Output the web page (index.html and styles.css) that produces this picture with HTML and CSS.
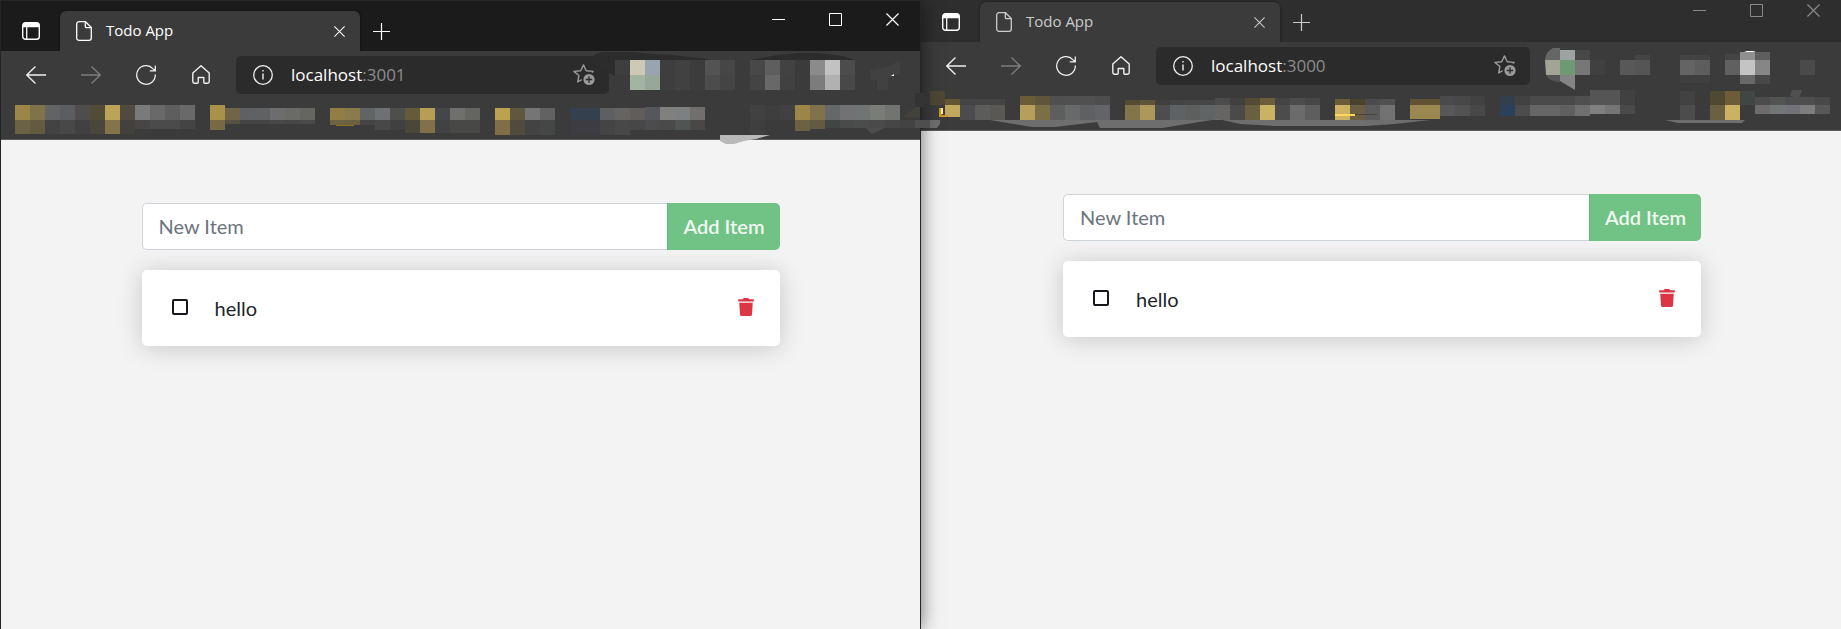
FILE: index.html
```html
<!DOCTYPE html>
<html lang="en">
<head>
<meta charset="utf-8">
<title>Todo App</title>
<link rel="stylesheet" href="styles.css">
</head>
<body>
<svg class="sprite" aria-hidden="true">
  <symbol id="i-tabs" viewBox="0 0 18 18"><rect x=".7" y=".7" width="16.6" height="16.6" rx="2.8" fill="none" stroke="currentColor" stroke-width="1.4"/><path d="M1 5.2V3a2 2 0 0 1 2-2h12a2 2 0 0 1 2 2v2.200z" fill="currentColor"/><path d="M4.700 5v12.500" stroke="currentColor" stroke-width="1.300"/></symbol>
  <symbol id="i-file" viewBox="0 0 16 20"><path d="M3 .7h6.500l5.800 5.800V17a2.300 2.300 0 0 1-2.300 2.300H3A2.300 2.300 0 0 1 .7 17V3A2.300 2.300 0 0 1 3 .7zM9.300 1v4.200c0 1 .6 1.500 1.500 1.500h4.200" fill="none" stroke="currentColor" stroke-width="1.300"/></symbol>
  <symbol id="i-x" viewBox="0 0 14 14"><path d="M.5.5l13 13M13.500.5l-13 13" stroke="currentColor" stroke-width="1.300"/></symbol>
  <symbol id="i-plus" viewBox="0 0 17 17"><path d="M8.500 0v17M0 8.500h17" stroke="currentColor" stroke-width="1.200"/></symbol>
  <symbol id="i-min" viewBox="0 0 13 13"><path d="M0 6.500h13" stroke="currentColor"/></symbol>
  <symbol id="i-max" viewBox="0 0 13 13"><path d="M.5.5h12v12H.5z" fill="none" stroke="currentColor"/></symbol>
  <symbol id="i-arrow" viewBox="0 0 20 18"><path d="M20 9H.8M9.500.5L.8 9l8.700 8.500" fill="none" stroke="currentColor" stroke-width="1.300"/></symbol>
  <symbol id="i-reload" viewBox="0 0 20 20"><path d="M19.300 9.500A9.300 9.300 0 1 1 16.800 3.600L18.800 5.500M19.300.4v5.400h-5.500" fill="none" stroke="currentColor" stroke-width="1.300"/></symbol>
  <symbol id="i-home" viewBox="0 0 18 19"><path d="M9 .8L.8 8v8.500c0 1 .6 1.700 1.700 1.700h2.700c.6 0 1-.4 1-1v-4.700h5.600v4.700c0 .6.4 1 1 1h2.700c1.100 0 1.700-.7 1.700-1.700V8z" fill="none" stroke="currentColor" stroke-width="1.400" stroke-linejoin="round"/></symbol>
  <symbol id="i-info" viewBox="0 0 20 20"><circle cx="10" cy="10" r="9.300" fill="none" stroke="currentColor" stroke-width="1.300"/><path d="M10 8.500v6M10 5v1.500" stroke="currentColor" stroke-width="1.400"/></symbol>
  <symbol id="i-star" viewBox="0 0 22 22"><path d="M8.600 15.700L4.700 18l1.200-6.500L.9 7.400 7.700 6.800 10.500.9l2.700 5.900 6.900.6-1.300 1.200" fill="none" stroke="currentColor" stroke-width="1.400" stroke-linejoin="round"/><circle cx="16" cy="15.500" r="5.600" fill="currentColor"/><path d="M16 12.300v6.400M12.800 15.500h6.400" stroke="#2b2b2b" stroke-width="1.300"/></symbol>
  <symbol id="i-trash" viewBox="0 0 448 512"><path d="M432 32H312l-9.400-18.700A24 24 0 0 0 281.100 0H166.800a23.700 23.700 0 0 0-21.400 13.300L136 32H16A16 16 0 0 0 0 48v32a16 16 0 0 0 16 16h416a16 16 0 0 0 16-16V48a16 16 0 0 0-16-16zM32 136l21.200 331a48 48 0 0 0 47.900 45h245.800a48 48 0 0 0 47.900-45L416 136z" fill="currentColor"/></symbol>
</svg>

<div class="desktop">
  <section class="window window-front">
    <header class="titlebar">
      <button class="tab-actions" aria-label="Tab actions"><svg width="18" height="18"><use href="#i-tabs"/></svg></button>
      <div class="tab">
        <svg width="16" height="20"><use href="#i-file"/></svg>
        <span class="tab-title">Todo App</span>
        <button aria-label="Close tab"><svg width="11" height="11"><use href="#i-x"/></svg></button>
      </div>
      <button class="new-tab" aria-label="New tab"><svg width="17" height="17"><use href="#i-plus"/></svg></button>
      <div class="controls">
        <button aria-label="Minimize"><svg width="13" height="13"><use href="#i-min"/></svg></button>
        <button aria-label="Maximize"><svg width="13" height="13"><use href="#i-max"/></svg></button>
        <button aria-label="Close"><svg width="13" height="13"><use href="#i-x"/></svg></button>
      </div>
    </header>
    <nav class="toolbar">
      <button aria-label="Back"><svg width="20" height="18"><use href="#i-arrow"/></svg></button>
      <button class="forward" aria-label="Forward" disabled><svg width="20" height="18"><use href="#i-arrow"/></svg></button>
      <button aria-label="Reload"><svg width="20" height="20"><use href="#i-reload"/></svg></button>
      <button aria-label="Home"><svg width="18" height="19"><use href="#i-home"/></svg></button>
      <div class="address">
        <svg width="20" height="20"><use href="#i-info"/></svg>
        <div class="url" role="textbox" aria-label="Address" contenteditable="true" spellcheck="false">localhost<span class="port">:3001</span></div>
        <button aria-label="Add to favorites"><svg width="22" height="22"><use href="#i-star"/></svg></button>
      </div>
      <svg class="extensions" id="ext-front" viewBox="609 51 311 50" aria-hidden="true"></svg>
    </nav>
    <div class="bookmarks"><svg id="marks-front" width="919" height="38" viewBox="1 101 919 38" aria-hidden="true"></svg></div>
    <main class="page">
      <div class="todo">
        <form class="add">
          <input type="text" placeholder="New Item" aria-label="New Item">
          <button type="button">Add Item</button>
        </form>
        <div class="item">
          <input type="checkbox" id="hello-front">
          <label for="hello-front">hello</label>
          <button aria-label="Remove item"><svg width="16" height="18"><use href="#i-trash"/></svg></button>
        </div>
      </div>
    </main>
  </section>

  <section class="window window-back">
    <header class="titlebar">
      <button class="tab-actions" aria-label="Tab actions"><svg width="18" height="18"><use href="#i-tabs"/></svg></button>
      <div class="tab">
        <svg width="16" height="20"><use href="#i-file"/></svg>
        <span class="tab-title">Todo App</span>
        <button aria-label="Close tab"><svg width="11" height="11"><use href="#i-x"/></svg></button>
      </div>
      <button class="new-tab" aria-label="New tab"><svg width="17" height="17"><use href="#i-plus"/></svg></button>
      <div class="controls">
        <button aria-label="Minimize"><svg width="13" height="13"><use href="#i-min"/></svg></button>
        <button aria-label="Maximize"><svg width="13" height="13"><use href="#i-max"/></svg></button>
        <button aria-label="Close"><svg width="13" height="13"><use href="#i-x"/></svg></button>
      </div>
    </header>
    <nav class="toolbar">
      <button aria-label="Back"><svg width="20" height="18"><use href="#i-arrow"/></svg></button>
      <button class="forward" aria-label="Forward" disabled><svg width="20" height="18"><use href="#i-arrow"/></svg></button>
      <button aria-label="Reload"><svg width="20" height="20"><use href="#i-reload"/></svg></button>
      <button aria-label="Home"><svg width="18" height="19"><use href="#i-home"/></svg></button>
      <div class="address">
        <svg width="20" height="20"><use href="#i-info"/></svg>
        <div class="url" role="textbox" aria-label="Address" contenteditable="true" spellcheck="false">localhost<span class="port">:3000</span></div>
        <button aria-label="Add to favorites"><svg width="22" height="22"><use href="#i-star"/></svg></button>
      </div>
      <svg class="extensions" id="ext-back" viewBox="1530 42 311 50" aria-hidden="true"></svg>
    </nav>
    <div class="bookmarks"><svg id="marks-back" width="920" height="38" viewBox="921 92 920 38" aria-hidden="true"></svg></div>
    <main class="page">
      <div class="todo">
        <form class="add">
          <input type="text" placeholder="New Item" aria-label="New Item">
          <button type="button">Add Item</button>
        </form>
        <div class="item">
          <input type="checkbox" id="hello-back">
          <label for="hello-back">hello</label>
          <button aria-label="Remove item"><svg width="16" height="18"><use href="#i-trash"/></svg></button>
        </div>
      </div>
    </main>
  </section>
</div>
<script src="mosaic.js"></script>
</body>
</html>
```
FILE: styles.css
```css
* { box-sizing: border-box; }

body {
  margin: 0;
  font-family: Lato, "Liberation Sans", sans-serif;
  font-size: 20px;
  color: #212529;
  background: #f3f3f3;
  overflow: hidden;
}

svg { display: block; flex: none; }
.sprite { display: none; }

button {
  display: flex;
  align-items: center;
  justify-content: center;
  padding: 0;
  border: 0;
  background: none;
  color: inherit;
  font: inherit;
}

.desktop {
  display: grid;
  grid-template-columns: 921fr 920fr;
  min-height: 100vh;
}

.window {
  display: flex;
  flex-direction: column;
  min-width: 0;
  background: #f3f3f3;
}

.window-front {
  position: relative;
  z-index: 1;
  border: 1px solid #232528;
  border-width: 0 1px;
  box-shadow: 0 0 18px rgba(0, 0, 0, 0.55);
}

.titlebar {
  display: flex;
  align-items: flex-end;
  height: 51px;
  background: #1b1b1b;
  border-top: 1px solid #242424;
  color: #fff;
}

.window-back .titlebar {
  height: 42px;
  background: #2e2e2e;
  border-top: 0;
}

.window-back .tab, .window-back .new-tab { color: #ccc; }

.tab-actions { width: 59px; height: 40px; }

.tab {
  display: flex;
  align-items: center;
  gap: 14px;
  width: 300px;
  height: 40px;
  padding: 0 15px 0 16px;
  border-radius: 6px 6px 0 0;
  background: #3b3b3b;
  box-shadow: 0 0 3px rgba(0, 0, 0, 0.5);
  clip-path: inset(-4px -4px 0 -4px);
  font: 15px "Open Sans", "Noto Sans", sans-serif;
}

.tab-title { flex: 1; padding-bottom: 2px; }
.new-tab { width: 43px; height: 40px; }

.controls {
  display: flex;
  align-self: flex-start;
  gap: 2px;
  height: 37px;
  margin-left: auto;
}

.controls button { width: 55px; }
.window-back .controls { height: 20px; color: #8a8a8a; }

.toolbar {
  display: flex;
  align-items: flex-start;
  height: 50px;
  padding: 5px 0 0 7px;
  background: #3b3b3b;
  color: #f0f0f0;
}

.toolbar > button { width: 55px; height: 37px; }
.toolbar > .forward { color: #7e7e7e; }
.forward svg { transform: scaleX(-1); }

.address {
  display: flex;
  flex: 1;
  align-items: center;
  height: 38px;
  margin-left: 8px;
  padding: 0 14px 0 17px;
  border-radius: 5px;
  background: #2b2b2b;
}

.address button { color: #9a9a9a; }

.url {
  flex: 1;
  margin-left: 18px;
  padding-bottom: 2px;
  color: #fff;
  font: 17px "Open Sans", "Noto Sans", sans-serif;
}

.port { color: #8c8c8c; }

.extensions {
  width: 311px;
  height: 50px;
  margin-top: -5px;
  overflow: visible;
}

.bookmarks {
  height: 39px;
  background: #3b3b3b;
  border-bottom: 1px solid #5c5c5c;
}

.bookmarks svg { overflow: visible; }

.page { flex: 1; padding: 63px 20px 20px; }
.window-back .page { padding-left: 22px; }

.todo {
  display: flex;
  flex-direction: column;
  gap: 20px;
  max-width: 638px;
  margin: 0 auto;
}

.add { display: flex; height: 47px; }

.add input {
  flex: 1;
  min-width: 0;
  padding: 0 16px 2px;
  border: 1px solid #ced4da;
  border-right: 0;
  border-radius: 5px 0 0 5px;
  background: #fff;
  font: inherit;
}

.add input::placeholder { color: #6c757d; opacity: 1; }

.add button {
  padding: 0 15px 2px;
  border-left: 1px solid #5fb978;
  border-radius: 0 5px 5px 0;
  background: #71c385;
  color: #f0f8f1;
  font-weight: 600;
}

.item {
  display: flex;
  align-items: center;
  height: 76px;
  padding: 0 26px 0 30px;
  border-radius: 5px;
  background: #fff;
  box-shadow: 0 2px 25px rgba(0, 0, 0, 0.18);
}

.item input {
  appearance: none;
  width: 16px;
  height: 16px;
  margin: 0 0 2px;
  border: 2px solid #16181d;
  border-radius: 2px;
}

.item label { flex: 1; margin-left: 27px; }
.item button { padding-bottom: 2px; color: #dc3545; }
```
FILE: mosaic.js
```javascript
// Each strip is [x, y, cell height, colours]; cells are 15 units wide, "-" leaves a gap.
const mosaics = {
  'marks-front': {
    strips: [
      [15, 105, 15, '9b8647 80734a 626363 5b5d60 4e4d4b 524b38 bca35a 504a41 7a7a7a 696969 5e5e5e 696969'],
      [15, 120, 14, '6b6145 625a41 434343 484848 414141 4a463c 84744a 42413b'],
      [135, 120, 9, '464646 4b4b4b 4b4b4b 444444'],
      [210, 105, 15, 'a9914a'],
      [225, 108, 12, '706547 5f6063 606163 6d6d6d 6a6a67 656562'],
      [210, 120, 10, '766943'],
      [225, 120, 4, '57513f 444444 444444 484848 464646 4a4a4a'],
      [330, 108, 12, '927e44 8b7b4c 606463 6f7073 4e4e4c 655b3b b69f54 44474a 6f6f6d 646460'],
      [330, 120, 5, '6e6340 6b6140 444444'],
      [375, 120, 10, '484848 404040'],
      [405, 120, 13, '4a4638 80714a 414244 484846 484846'],
      [495, 108, 12, 'bca250 60583e 757575 626262'],
      [495, 120, 15, '7f6e46 504b3e 434343 444746'],
      [570, 108, 12, '34404d 34404d 5d5f61 666462 605d5a'],
      [645, 107, 13, '56575b 80807e 7c8080 736e6e'],
      [570, 120, 15, '3c3c42 3c3c42 444444 484848'],
      [630, 120, 10, '474747 4c4c4e 4a4a4a 505452 4a4747'],
      [750, 105, 15, '414141 3e3e3e 414141 9b8647 80734c 656868 737272 717474 7a7c78 717470'],
      [750, 120, 14, '3f3f3f'],
      [795, 120, 11, '6c6142'],
      [810, 120, 9, '625a41'],
      [825, 120, 8, '414543 4a4a4a 4a4d4b 4a4a4a 464646 434343 4e4e4e'],
      [915, 93, 14, '343434']
    ],
    shapes: [
      ['M336 125h18v1h-18z', '91701c'],
      ['M720 135h50l-14 4-12 2-10 3h-8l-6-3z', 'b9b9b9'],
      ['M866 128h18l-12 6z', '4e4e4e'],
      ['M902 117l14-10h4v11z', '42413c']
    ]
  },
  'ext-front': {
    strips: [
      [615, 60, 15, '3e3e3e ccc9b4 9aa4af 3e3e3e 414141 3c3c3c 535353 464646'],
      [630, 75, 15, 'a4b4a2 98a898 3e3e3e 414141 3c3c3c 4c4c4c 444444'],
      [750, 60, 15, '484848 5e5e5e 424242 - 8b8b8b c2c2c2 4c4c4c'],
      [750, 75, 15, '444444 686868 414141 - 7c7c7c b1b1b1 484848']
    ],
    shapes: [
      ['M592 60l3-6 8-2h30l20 2 20 1 35 4v1h-93v16l-17-8z', '2c2c2c'],
      ['M750 60l28-5 20-2h20l25 3 12 4z', '2c2c2c'],
      ['M870 70l15-3 15-6v13l-12 4v12h-11v-10h-7z', '414141'],
      ['M891 76l3-2v2z', 'ffffff']
    ]
  },
  'marks-back': {
    strips: [
      [930, 91, 14, '4f4734'],
      [945, 99, 6, '625635 444444 454545 454545'],
      [945, 105, 12, 'c0a95c'],
      [960, 105, 15, '4c4c4e 5c5c5a 595855'],
      [1020, 96, 9, '695c38 5e553c 4f4f4f 505050 505050 4d4d4d'],
      [1020, 105, 15, 'b69f5c 7b6f47 5c5f5e 69696c 5e6062 626467'],
      [1125, 100, 5, '544b34 5f5438 404040 444444 464646 464646'],
      [1215, 98, 7, '4c4c4c 414141 544b34 6b5e38 444444 4c4c4c 474747'],
      [1125, 105, 15, '83754a ac985a 4d4d4f 5f6264 5c5f5d 616464 666462 4a4a48 6a5f40 cab264 4c4c4c 6b6b6b 5e5e5e'],
      [1335, 99, 6, '6a5c38 48422f 4c4c4e 505050 - 605232 605232'],
      [1335, 105, 15, 'ceb263 6a5f42 5b5b5b 727272'],
      [1410, 105, 14, '9b8750 9b8750'],
      [1440, 96, 9, '4a4a4c 484848 424242 - 343f4c 424242 4a4a4a 4a4a4a 4a4a4a 505050'],
      [1440, 105, 11, '57575a 525252 484848 - 2d4059 4c4c4c 666666 666666 606060 707070'],
      [1590, 90, 15, '555555 555555 414141'],
      [1590, 105, 9, '808080 757575 4a4a4a'],
      [1680, 91, 14, '424242 - 504932 6c5d38 414543'],
      [1680, 105, 15, '4c4c4c - 6b6042 cbb163'],
      [1755, 97, 8, '4c4c4c 525452 4e4e50 4e4e4e 484848'],
      [1755, 105, 9, '6d6b6b 727676 727278 7d7d7d 585858']
    ],
    shapes: [
      ['M990 120l42 7h23l42-5 3 6h62l56-9 22 5 35 2h90l30-2 35-4z', '6e6e6e'],
      ['M1665 120h80l-3 3h-64z', '6e6e6e'],
      ['M921 120h19v4l-3 4h-16z', '6e6e6e'],
      ['M939 108h3v7h6v2h-9z', 'c9972a'],
      ['M941 108h2v6h-2z', 'ffe9a8'],
      ['M1335 114h20v2h-20z', 'ffd55a'],
      ['M1355 114h22v1h-22z', '444444'],
      ['M1790 96l2-6h10l-3 8z', '505050']
    ]
  },
  'ext-back': {
    strips: [
      [1560, 50, 10, '9da3a3 484848'],
      [1560, 60, 15, '6f9975 777777 404040 - 585858 555555'],
      [1635, 55, 5, '444444'],
      [1680, 55, 5, '444444 424242'],
      [1680, 60, 15, '646464 5d5d5d - 606060 c4c4c4 868686'],
      [1680, 75, 8, '3f3f3f 3f3f3f'],
      [1725, 54, 6, '444444'],
      [1740, 52, 8, '909090 5e5e5e'],
      [1740, 75, 9, '686868 484848'],
      [1800, 60, 15, '4a4a4a']
    ],
    shapes: [
      ['M1560 48v12h-15q1-9 8-12z', '666666'],
      ['M1545 60h15v15h-14z', 'a3a495'],
      ['M1546 75h14v7q-11 0-14-7z', '555555'],
      ['M1560 75h15v15l-15-9z', '848484'],
      ['M1744 52l3-1h6l3 1z', 'ffffff']
    ]
  }
};

for (const [id, { strips, shapes }] of Object.entries(mosaics)) {
  const parts = [];
  for (const [x, y, h, colours] of strips) {
    colours.split(' ').forEach((c, i) => {
      if (c !== '-') parts.push(`<rect x="${x + i * 15}" y="${y}" width="15" height="${h}" fill="#${c}"/>`);
    });
  }
  // Freeform marks lie above the cells.
  for (const [d, fill] of shapes) parts.push(`<path d="${d}" fill="#${fill}"/>`);
  document.getElementById(id).innerHTML = parts.join('');
}
```
